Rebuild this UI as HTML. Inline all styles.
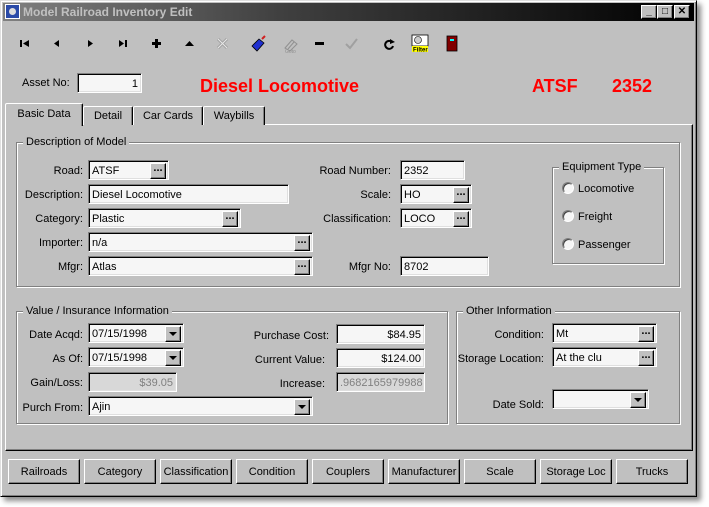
<!DOCTYPE html>
<html><head><style>
*{box-sizing:border-box;margin:0;padding:0}
body{width:709px;height:507px;background:#fff;position:relative;overflow:hidden;font-family:"Liberation Sans",sans-serif;font-size:11px;color:#000}
.a{position:absolute}
.win{left:0;top:0;width:697px;height:497px;background:#c0c0c0;border:1px solid;border-color:#dfdfdf #000 #000 #dfdfdf;box-shadow:inset 1px 1px #fff,inset -1px -1px #808080,4px 4px 5px rgba(0,0,0,.45)}
.title{left:3px;top:3px;width:691px;height:18px;background:linear-gradient(90deg,#808080,#404040 40%,#000);color:#c0c0c0;font-weight:bold;font-size:12px;line-height:18px;padding-left:20px}
.tb{width:16px;height:14px;top:5px;background:#c0c0c0;border:1px solid;border-color:#fff #000 #000 #fff;box-shadow:inset -1px -1px #808080;font-size:10px;font-weight:bold;text-align:center;line-height:12px}
.in{background:#f6f6f6;border:1px solid;border-color:#808080 #fff #fff #808080;box-shadow:inset 1px 1px #000,inset -1px -1px #dfdfdf;height:20px;padding:3px 3px 0;line-height:15px;white-space:nowrap;overflow:hidden}
.r{text-align:right}
.dis{background:#d8d8d8;color:#808080}
.lb{line-height:14px;white-space:nowrap}
.lr{text-align:right}
.dot{position:absolute;right:2px;top:2px;width:16px;height:16px;background:#c0c0c0;border:1px solid;border-color:#fff #000 #000 #fff;box-shadow:inset -1px -1px #808080;font-weight:bold;text-align:center;line-height:9px;font-size:11px}
.dd{position:absolute;right:2px;top:2px;width:16px;height:16px;background:#c0c0c0;border:1px solid;border-color:#fff #000 #000 #fff;box-shadow:inset -1px -1px #808080}
.dd:after{content:"";position:absolute;left:3px;top:5px;border:4px solid transparent;border-top:4px solid #000;border-bottom:0}
.grp{border:1px solid #808080;box-shadow:inset 1px 1px #fff,1px 1px #fff}
.gt{position:absolute;top:-8px;left:6px;background:#c0c0c0;padding:0 3px;line-height:14px}
.btn{top:459px;width:72px;height:25px;background:#c0c0c0;border:1px solid;border-color:#fff #000 #000 #fff;box-shadow:inset -1px -1px #808080;text-align:center;line-height:24px;font-size:11px}
.tab{top:106px;height:19px;background:#c0c0c0;border:1px solid;border-bottom:0;border-color:#fff #000 #000 #fff;box-shadow:inset -1px 0 #808080;text-align:center;line-height:19px;border-radius:2px 2px 0 0}
.rad{width:12px;height:12px;border-radius:50%;background:#f6f6f6;border:1px solid;border-color:#808080 #fff #fff #808080;box-shadow:inset 1px 1px #404040}
.red{color:#f00;font-weight:bold;font-size:18px;line-height:22px}
</style></head><body>
<div class="a win"></div>
<div class="a title">Model Railroad Inventory Edit</div>
<div class="a" style="left:5px;top:4px;width:15px;height:15px;background:#2a4aa8;border:1px solid #fff"><div style="margin:3px;width:7px;height:7px;background:#ddd;border-radius:50%"></div></div>
<div class="a tb" style="left:641px">_</div>
<div class="a tb" style="left:657px">□</div>
<div class="a tb" style="left:674px">✕</div>

<svg class="a" style="left:14px;top:34px" width="460" height="20" viewBox="0 0 460 20">
<g fill="#000">
<rect x="6" y="6" width="2" height="7"/><polygon points="15,6 15,13 9,9.5"/>
<polygon points="45,6 45,13 40,9.5"/>
<polygon points="74,6 74,13 79,9.5"/>
<polygon points="105,6 105,13 110,9.5"/><rect x="111" y="6" width="2" height="7"/>
<rect x="138" y="8" width="9" height="3"/><rect x="141" y="5" width="3" height="9"/>
<polygon points="171,12 180,12 175.5,7"/>
<rect x="301" y="8" width="9" height="3"/>
</g>
<path d="M204 5 L213 14 M213 5 L204 14" stroke="#a0a0a0" stroke-width="3" fill="none"/>
<path d="M204 5 L213 14 M213 5 L204 14" stroke="#e8e8e8" stroke-width="1" fill="none"/>
<g transform="translate(236,2)"><polygon points="2,10 9,3 14,7 7,15" fill="#2030d0" stroke="#000" stroke-width="0.8"/><path d="M12,3 L15,0" stroke="#d02020" stroke-width="2"/></g>
<g transform="translate(268,2)" fill="none" stroke="#909090"><path d="M3 12 L10 4 L15 8 L8 15Z"/><path d="M6 13 L12 6"/></g>
<text x="271" y="19" font-size="5" fill="#909090" font-family="Liberation Sans">Goto</text>
<path d="M332 10 L336 14 L343 5" stroke="#a0a0a0" stroke-width="2" fill="none"/>
<path d="M378 8 A4 4 0 1 0 379 12" stroke="#000" stroke-width="2" fill="none"/><polygon points="376,5 381,8 376,10" fill="#000"/>
<rect x="398" y="1" width="16" height="11" fill="#fff" stroke="#000" stroke-width="0.8"/><circle cx="404" cy="6" r="3.5" fill="#ccc" stroke="#000" stroke-width="0.6"/>
<rect x="398" y="12" width="16" height="6" fill="#ff0"/><text x="399" y="17.5" font-size="6" font-weight="bold" font-family="Liberation Sans">Filter</text>
<rect x="433" y="2" width="10" height="15" fill="#800000" stroke="#000" stroke-width="0.8"/><rect x="436" y="5" width="4" height="2" fill="#0ff"/>
</svg>

<div class="a lb" style="left:22px;top:76px">Asset No:</div>
<div class="a in r" style="left:77px;top:73px;width:65px">1</div>
<div class="a red" style="left:200px;top:75px">Diesel Locomotive</div>
<div class="a red" style="left:532px;top:75px">ATSF</div>
<div class="a red" style="left:612px;top:75px">2352</div>

<div class="a" style="left:5px;top:124px;width:688px;height:327px;border:1px solid;border-color:#fff #000 #000 #fff;box-shadow:inset -1px -1px #808080"></div>
<div class="a tab" style="left:83px;width:50px">Detail</div>
<div class="a tab" style="left:133px;width:70px">Car Cards</div>
<div class="a tab" style="left:203px;width:62px">Waybills</div>
<div class="a tab" style="left:5px;top:103px;height:23px;width:78px;line-height:21px;z-index:2">Basic Data</div>

<div class="a grp" style="left:16px;top:142px;width:664px;height:145px"><div class="gt">Description of Model</div></div>
<div class="a lb lr" style="left:10px;width:73px;top:164px">Road:</div>
<div class="a in" style="left:88px;top:160px;width:81px">ATSF<div class="dot">...</div></div>
<div class="a lb lr" style="left:10px;width:73px;top:188px">Description:</div>
<div class="a in" style="left:88px;top:184px;width:201px">Diesel Locomotive</div>
<div class="a lb lr" style="left:10px;width:73px;top:212px">Category:</div>
<div class="a in" style="left:88px;top:208px;width:153px">Plastic<div class="dot">...</div></div>
<div class="a lb lr" style="left:10px;width:73px;top:236px">Importer:</div>
<div class="a in" style="left:88px;top:232px;width:225px">n/a<div class="dot">...</div></div>
<div class="a lb lr" style="left:10px;width:73px;top:260px">Mfgr:</div>
<div class="a in" style="left:88px;top:256px;width:225px">Atlas<div class="dot">...</div></div>

<div class="a lb lr" style="left:290px;width:101px;top:164px">Road Number:</div>
<div class="a in" style="left:400px;top:160px;width:65px">2352</div>
<div class="a lb lr" style="left:290px;width:101px;top:188px">Scale:</div>
<div class="a in" style="left:400px;top:184px;width:72px">HO<div class="dot">...</div></div>
<div class="a lb lr" style="left:290px;width:101px;top:212px">Classification:</div>
<div class="a in" style="left:400px;top:208px;width:72px">LOCO<div class="dot">...</div></div>
<div class="a lb lr" style="left:290px;width:101px;top:260px">Mfgr No:</div>
<div class="a in" style="left:400px;top:256px;width:89px">8702</div>

<div class="a grp" style="left:552px;top:167px;width:112px;height:97px"><div class="gt">Equipment Type</div></div>
<div class="a rad" style="left:562px;top:182px"></div><div class="a lb" style="left:578px;top:182px">Locomotive</div>
<div class="a rad" style="left:562px;top:210px"></div><div class="a lb" style="left:578px;top:210px">Freight</div>
<div class="a rad" style="left:562px;top:238px"></div><div class="a lb" style="left:578px;top:238px">Passenger</div>

<div class="a grp" style="left:16px;top:311px;width:432px;height:113px"><div class="gt">Value / Insurance Information</div></div>
<div class="a lb lr" style="left:10px;width:73px;top:328px">Date Acqd:</div>
<div class="a in" style="left:88px;top:323px;width:96px">07/15/1998<div class="dd"></div></div>
<div class="a lb lr" style="left:10px;width:73px;top:352px">As Of:</div>
<div class="a in" style="left:88px;top:347px;width:96px">07/15/1998<div class="dd"></div></div>
<div class="a lb lr" style="left:10px;width:73px;top:376px">Gain/Loss:</div>
<div class="a in r dis" style="left:88px;top:372px;width:89px">$39.05</div>
<div class="a lb lr" style="left:10px;width:73px;top:401px">Purch From:</div>
<div class="a in" style="left:88px;top:396px;width:225px">Ajin<div class="dd"></div></div>

<div class="a lb lr" style="left:220px;width:109px;top:329px">Purchase Cost:</div>
<div class="a in r" style="left:336px;top:324px;width:89px">$84.95</div>
<div class="a lb lr" style="left:220px;width:105px;top:353px">Current Value:</div>
<div class="a in r" style="left:336px;top:348px;width:89px">$124.00</div>
<div class="a lb lr" style="left:220px;width:105px;top:377px">Increase:</div>
<div class="a in r dis" style="left:336px;top:372px;width:89px">.9682165979988</div>

<div class="a grp" style="left:456px;top:311px;width:224px;height:113px"><div class="gt">Other Information</div></div>
<div class="a lb lr" style="left:440px;width:104px;top:328px">Condition:</div>
<div class="a in" style="left:552px;top:323px;width:105px">Mt<div class="dot">...</div></div>
<div class="a lb lr" style="left:440px;width:104px;top:352px">Storage Location:</div>
<div class="a in" style="left:552px;top:347px;width:105px">At the clu<div class="dot">...</div></div>
<div class="a lb lr" style="left:440px;width:104px;top:398px">Date Sold:</div>
<div class="a in" style="left:552px;top:389px;width:97px"><div class="dd"></div></div>

<div class="a btn" style="left:8px">Railroads</div>
<div class="a btn" style="left:84px">Category</div>
<div class="a btn" style="left:160px">Classification</div>
<div class="a btn" style="left:236px">Condition</div>
<div class="a btn" style="left:312px">Couplers</div>
<div class="a btn" style="left:388px">Manufacturer</div>
<div class="a btn" style="left:464px">Scale</div>
<div class="a btn" style="left:540px">Storage Loc</div>
<div class="a btn" style="left:616px">Trucks</div>
</body></html>
